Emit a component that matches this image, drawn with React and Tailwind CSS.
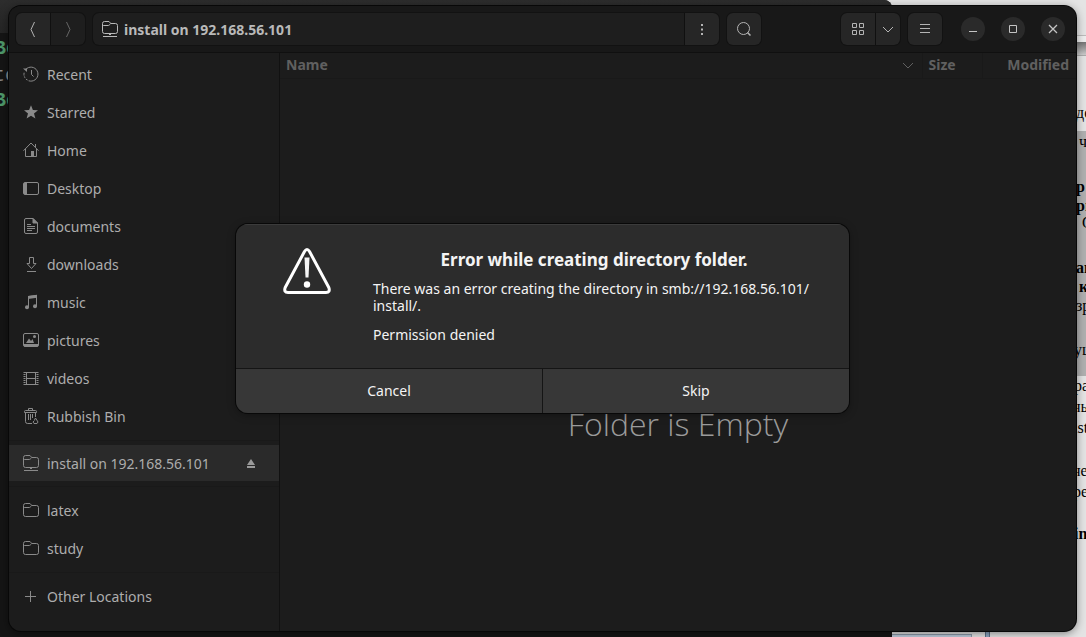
import React from "react";

function Icon({ children, className = "" }) {
  return (
    <svg
      viewBox="0 0 16 16"
      width="16"
      height="16"
      fill="none"
      stroke="currentColor"
      strokeWidth="1"
      className={`shrink-0 ${className}`}
      aria-hidden="true"
    >
      {children}
    </svg>
  );
}

const folder = (
  <>
    <path d="M.5 4v8.500a2 2 0 0 0 2 2h11a2 2 0 0 0 2-2v-7a2 2 0 0 0-2-2H8.700L7.500 2 7 1.500H2.500a2 2 0 0 0-2 2z" />
    <path d="M.5 6.500a1 1 0 0 1 1-1H6c1 0 1.500-.5 2.700-2" />
  </>
);

const icons = {
  recent: (
    <>
      <path d="M2.700 3.500a7 7 0 1 1-1.600 3.200" />
      <path d="M8.500 4v4.500l2 2" />
      <path d="M0 2.500h4v3.500z" fill="currentColor" stroke="none" />
      <path d="M1 9.500a7 7 0 0 0 5 5.300" stroke="#1c1c1c" strokeWidth="1.600" strokeDasharray="1 2" />
    </>
  ),
  star: (
    <path
      d="M8 1.200l1.900 4.900 5.100.2-4 3.200 1.400 5.100L8 11.700l-4.400 2.900L5 9.500 1 6.300l5.100-.2z"
      fill="currentColor"
      stroke="none"
    />
  ),
  home: (
    <>
      <path d="M.5 8.700 8 1l7.500 7.700M2.500 7v7.500h11V7M12.500 2v3" />
      <path d="M8 9h3v5.500H8z" fill="currentColor" stroke="none" />
    </>
  ),
  desktop: (
    <>
      <rect x=".5" y="2.500" width="15" height="12" rx="1.500" />
      <path d="M1 3h3v11H1z" fill="currentColor" stroke="none" />
    </>
  ),
  document: (
    <>
      <path d="M10 .5H3a1.500 1.500 0 0 0-1.500 1.500v12A1.500 1.500 0 0 0 3 15.500h10a1.500 1.500 0 0 0 1.500-1.500V5z" />
      <path d="M10 .5V5h4.500z" fill="currentColor" />
      <path d="M4 6.500h4M4 8.500h8M4 10.500h8M4 12.500h5" />
    </>
  ),
  download: <path d="M6.500 1.500h4v6H13l-4.500 5-4.500-5h2.500zM4 15.500h9" />,
  music: (
    <>
      <path d="M5.500 13V2.500l8-1V12" />
      <path d="M5 2l9-1.300v3L5 5z" fill="currentColor" stroke="none" />
      <circle cx="4" cy="13.300" r="2" fill="currentColor" stroke="none" />
      <circle cx="12" cy="12.300" r="2" fill="currentColor" stroke="none" />
    </>
  ),
  picture: (
    <>
      <rect x=".5" y="1.500" width="15" height="13" rx="1.500" />
      <path d="M1 12h14v2.500H1z" fill="currentColor" stroke="none" />
      <path d="M3 11l3-4.500L8 9l1.500-2 1.500 4z" fill="currentColor" stroke="none" />
      <circle cx="11.500" cy="4.500" r="1.500" fill="currentColor" stroke="none" />
    </>
  ),
  video: (
    <>
      <path d="M3.500 2.500h9v12h-9zM3.500 8.500h9" />
      <path d="M1.500 2v13M14.500 2v13" strokeWidth="2" strokeDasharray="1 1" />
      <path d="M1 2.500h14M1 14.500h14" />
    </>
  ),
  trash: (
    <>
      <path d="M5.500 2.500v-2h4v2M1.500 4.500v-1q0-1 1-1h10q1 0 1 1v1z" />
      <path d="M2.500 4.500v9a2 2 0 0 0 2 2H9M12.500 5v4M5.500 6v6M7.500 6v6M9.500 6v4" />
      <path d="M12.500 10l2.500 4-1 1.500h-3L10 14l1.500-1.500M12.500 10l-1 2" />
    </>
  ),
  remote: (
    <>
      <path d="M.5 3v7.500a2 2 0 0 0 2 2h11a2 2 0 0 0 2-2v-6a2 2 0 0 0-2-2H8.700L7.500 1 7 .5H2.500a2 2 0 0 0-2 2z" />
      <path d="M.5 5.500a1 1 0 0 1 1-1H6c1 0 1.500-.5 2.700-2M7 13.500h2M1 15.500h14" />
    </>
  ),
  folder,
  plus: <path d="M2 8.500h11M7.500 3v11" />,
};

const places = [
  ["recent", "Recent"],
  ["star", "Starred"],
  ["home", "Home"],
  ["desktop", "Desktop"],
  ["document", "documents"],
  ["download", "downloads"],
  ["music", "music"],
  ["picture", "pictures"],
  ["video", "videos"],
  ["trash", "Rubbish Bin"],
];

function Place({ icon, label }) {
  return (
    <li>
      <a href="#" className="flex h-[38px] items-center gap-2 pl-[14px]">
        <Icon className="text-[#8a8a8a]">{icons[icon]}</Icon>
        {label}
      </a>
    </li>
  );
}

function Divider() {
  return <hr className="mt-[5px] mb-1 border-t border-[#191919]" />;
}

function Sidebar() {
  return (
    <nav aria-label="Places" className="w-[271px] shrink-0 border-r border-[#111111] pt-[2px] text-[14px] text-[#adadad]">
      <ul>
        {places.map(([icon, label]) => (
          <Place key={label} icon={icon} label={label} />
        ))}
      </ul>
      <Divider />
      <div className="flex h-9 items-center bg-[#2a2a2a] pr-5 pl-[14px]">
        <a href="#" className="flex grow items-center gap-2">
          <Icon className="text-[#8a8a8a]">{icons.remote}</Icon>
          install on 192.168.56.101
        </a>
        <button type="button" aria-label="Eject" className="text-[#9a9a9a]">
          <svg width="16" height="16" viewBox="0 0 16 16" fill="currentColor" aria-hidden="true">
            <path d="M8 4l4 6H4zM4 11h8v2H4z" />
          </svg>
        </button>
      </div>
      <Divider />
      <ul>
        <Place icon="folder" label="latex" />
        <Place icon="folder" label="study" />
      </ul>
      <Divider />
      <ul>
        <Place icon="plus" label="Other Locations" />
      </ul>
    </nav>
  );
}

function ToolButton({ label, className = "", children }) {
  return (
    <button
      type="button"
      aria-label={label}
      className={`flex h-8 items-center justify-center bg-[#262626] text-[#b4b4b4] ${className}`}
    >
      {children}
    </button>
  );
}

function WindowButton({ label, children }) {
  return (
    <button
      type="button"
      aria-label={label}
      className="flex size-6 items-center justify-center rounded-full bg-[#2a2a2a] text-[#c4c4c4]"
    >
      {children}
    </button>
  );
}

function HeaderBar() {
  return (
    <header className="flex h-[47px] items-center gap-2 border-b border-[#101010] bg-[#181818] px-[7px]">
      <div className="flex gap-px overflow-hidden rounded-md bg-[#101010] ring-1 ring-[#121212]">
        <ToolButton label="Back" className="w-[34px]">
          <Icon><path d="M9.500 1 6 8.500 9.500 16" /></Icon>
        </ToolButton>
        <ToolButton label="Forward" className="w-[34px] bg-[#1e1e1e]! text-[#666666]!">
          <Icon><path d="M6.500 1 10 8.500 6.500 16" /></Icon>
        </ToolButton>
      </div>
      <div className="flex grow gap-px overflow-hidden rounded-md bg-[#101010] ring-1 ring-[#121212]">
        <a
          href="#"
          className="flex h-8 grow items-center gap-[6px] bg-[#1e1e1e] pl-[9px] text-[14px] font-bold text-[#b9b9b9]"
        >
          <Icon>{icons.remote}</Icon>
          install on 192.168.56.101
        </a>
        <ToolButton label="Path menu" className="w-[34px]">
          <Icon><path d="M7 3h2v2H7zM7 7.500h2v2H7zM7 12h2v2H7z" fill="currentColor" stroke="none" /></Icon>
        </ToolButton>
      </div>
      <ToolButton label="Search" className="w-[34px] rounded-md ring-1 ring-[#121212]">
        <Icon>
          <circle cx="7.500" cy="7.500" r="6" />
          <path d="M11.500 11.500l3 3" strokeWidth="1.500" />
        </Icon>
      </ToolButton>
      <div className="ml-[72px] flex gap-px overflow-hidden rounded-md bg-[#101010] ring-1 ring-[#121212]">
        <ToolButton label="Grid view" className="w-[34px]">
          <Icon><path d="M2.500 2.500h4v4h-4zM9.500 2.500h4v4h-4zM2.500 9.500h4v4h-4zM9.500 9.500h4v4h-4z" /></Icon>
        </ToolButton>
        <ToolButton label="View options" className="w-6">
          <Icon><path d="M3 6l5 5 5-5" /></Icon>
        </ToolButton>
      </div>
      <ToolButton label="Main menu" className="w-[34px] rounded-md ring-1 ring-[#121212]">
        <Icon><path d="M3 3.500h10M3 7.500h10M3 11.500h10" /></Icon>
      </ToolButton>
      <div className="ml-[11px] flex gap-4 pr-1">
        <WindowButton label="Minimise"><Icon><path d="M4 10.500h8" /></Icon></WindowButton>
        <WindowButton label="Maximise"><Icon><path d="M4.500 4.500h7v7h-7z" /></Icon></WindowButton>
        <WindowButton label="Close"><Icon><path d="M4 4l8 8M12 4l-8 8" strokeWidth="1.300" /></Icon></WindowButton>
      </div>
    </header>
  );
}

function FileList() {
  return (
    <main className="flex grow flex-col">
      <table className="w-full text-[14px] text-[#606060]">
        <thead>
          <tr className="h-[25px] border-b border-[#191919] text-left">
            <th scope="col" className="py-0 pr-[6px] pl-[6px]">
              <div className="flex items-center justify-between leading-5">
                Name
                <Icon><path d="M3 6l5 5 5-5" /></Icon>
              </div>
            </th>
            <th scope="col" className="w-[60px] border-l border-[#191919] py-0 pl-[6px] leading-5">Size</th>
            <th scope="col" className="w-[94px] border-l border-[#191919] py-0 pr-[7px] text-right leading-5">Modified</th>
          </tr>
        </thead>
      </table>
      <div className="flex grow items-center justify-center pt-[138px]">
        <p className="font-[Open_Sans,Noto_Sans,sans-serif] text-[32px] leading-10 font-light text-[#9b9b9b]">
          Folder is Empty
        </p>
      </div>
    </main>
  );
}

function ErrorDialog() {
  return (
    <div className="absolute inset-0 flex items-center justify-center pr-px">
      <section
        role="alertdialog"
        aria-labelledby="error-title"
        aria-describedby="error-text"
        className="w-[613px] overflow-hidden rounded-xl bg-[#2c2c2c] text-[14px] text-[#f4f4f4] shadow-[0_2px_8px_rgba(0,0,0,0.35)] ring-1 ring-[#080808]"
      >
        <div className="flex h-36 gap-[42px] border-t border-[#3b3b3b] pt-[23px] pl-[47px]">
          <svg width="48" height="48" viewBox="0 0 48 48" className="shrink-0" aria-hidden="true">
            <path
              d="M21.500 3.500 2.200 39.500Q.5 44.500 5 44.500h38Q47.500 44.500 45.800 39.500L26.500 3.500Q24-.5 21.500 3.500z"
              fill="none"
              stroke="#fff"
              strokeWidth="3"
              strokeLinejoin="round"
            />
            <path d="M21.500 9.500h5l-1 20h-3z" fill="#f4f4f4" />
            <circle cx="24" cy="36.500" r="3.200" fill="#fff" />
          </svg>
          <div id="error-text" className="w-[442px] leading-[17px]">
            <h1 id="error-title" className="text-center text-[17px] leading-6 font-bold">
              Error while creating directory folder.
            </h1>
            <p className="mt-2">
              There was an error creating the directory in smb://192.168.56.101/
              <wbr />
              install/.
            </p>
            <p className="mt-3">Permission denied</p>
          </div>
        </div>
        <div className="grid grid-cols-2 gap-px border-t border-[#151515] bg-[#151515]">
          <button type="button" className="h-11 bg-[#373737] pb-[2px]">Cancel</button>
          <button type="button" className="h-11 bg-[#373737] pb-[2px]">Skip</button>
        </div>
      </section>
    </div>
  );
}

function Backdrop() {
  return (
    <div className="absolute inset-0 overflow-hidden bg-[#e4e4e4] font-[Liberation_Serif,serif] text-[16px] leading-5 text-black">
      <div className="absolute top-[35px] right-0 h-[7px] w-[20px] border-t border-[#bcbcbc] bg-[#eeeeee]" />
      <div className="absolute top-[42px] right-0 h-[14px] w-[20px] border-b border-[#aaaaaa] bg-linear-to-b from-[#747474] to-[#cccccc]" />
      <div className="absolute top-[131px] right-0 h-[245px] w-[20px] bg-[#b0b0b0]" />
      <span className="absolute top-[103px] left-[1076px]">де</span>
      <span className="absolute top-[132px] left-[1079px]">ч</span>
      <b className="absolute top-[177px] left-[1076px]">р</b>
      <b className="absolute top-[196px] left-[1076px]">рг</b>
      <span className="absolute top-[213px] left-[1082px]">О</span>
      <b className="absolute top-[258px] left-[1076px]">ан</b>
      <b className="absolute top-[277px] left-[1079px]">к</b>
      <span className="absolute top-[296px] left-[1076px]">зр</span>
      <span className="absolute top-[340px] left-[1074px]">ущ</span>
      <span className="absolute top-[376px] left-[1074px]">ра</span>
      <span className="absolute top-[397px] left-[1072px]">нь</span>
      <span className="absolute top-[418px] left-[1073px]">ist</span>
      <span className="absolute top-[461px] left-[1072px]">не</span>
      <span className="absolute top-[482px] left-[1073px]">ре</span>
      <b className="absolute top-[524px] left-[1074px]">in</b>
      <div className="absolute bottom-0 left-[880px] h-[3px] w-[92px] border-t border-r border-[#8d9cab] bg-[#bccbdb]" />
      <div className="absolute bottom-0 left-[985px] h-[12px] w-[5px] border-x border-[#5c7188] bg-[#8fa8c2]" />
      <div className="absolute top-0 left-0 h-full w-[892px] rounded-tr-lg bg-[#151515] font-[Liberation_Mono,monospace] text-[20px] font-bold text-[#4f9a6b]">
        <div className="h-[33px] rounded-tr-lg bg-linear-to-b from-[#2d2d2d] to-[#252525]" />
        <span className="absolute top-[39px] left-[-6px]">Be</span>
        <span className="absolute top-[66px] left-[-7px] font-normal text-[#8c8c8c]">to</span>
        <span className="absolute top-[91px] left-[-6px]">Be</span>
      </div>
    </div>
  );
}

export default function App() {
  return (
    <div className="relative flex min-h-screen flex-col overflow-hidden pt-[6px] pr-[10px] pb-[6px] pl-[9px] font-[Noto_Sans,Open_Sans,sans-serif]">
      <Backdrop />
      <div className="relative flex grow flex-col overflow-hidden rounded-xl bg-[#1c1c1c] shadow-[0_2px_10px_rgba(0,0,0,0.5)] ring-1 ring-[#080808]">
        <HeaderBar />
        <div className="flex grow">
          <Sidebar />
          <FileList />
        </div>
      </div>
      <ErrorDialog />
    </div>
  );
}
